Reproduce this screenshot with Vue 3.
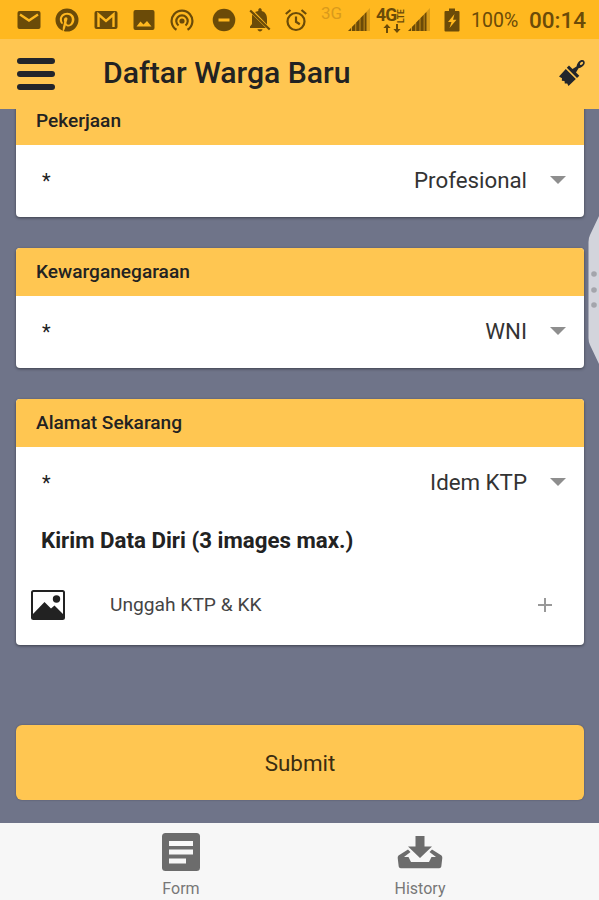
<template>
  <div class="app">
    <div class="status-bar">
      <svg class="st mail" width="24" height="20" viewBox="0 0 24 20">
        <rect x="0.5" y="1" width="23" height="18" rx="2" />
        <path class="cut" d="M3 4.5l9 6 9-6" />
      </svg>
      <svg class="st pinterest" width="24" height="24" viewBox="0 0 24 24">
        <path d="M9.04 21.54c.96.29 1.93.46 2.96.46a10 10 0 1 0-10-10c0 4.25 2.67 7.9 6.44 9.34-.09-.78-.18-2.07 0-2.96l1.15-4.94s-.29-.58-.29-1.5c0-1.38.86-2.41 1.84-2.41.86 0 1.26.63 1.26 1.44 0 .86-.57 2.09-.86 3.27-.17.98.52 1.84 1.52 1.84 1.78 0 3.16-1.9 3.16-4.58 0-2.4-1.72-4.04-4.19-4.04-2.82 0-4.48 2.1-4.48 4.31 0 .86.28 1.73.74 2.3.09.06.09.14.06.29l-.29 1.09c0 .17-.11.23-.28.11-1.28-.56-2.02-2.38-2.02-3.85 0-3.16 2.24-6.03 6.56-6.03 3.44 0 6.12 2.47 6.12 5.75 0 3.44-2.13 6.2-5.18 6.2-.97 0-1.92-.52-2.26-1.13l-.67 2.37c-.23.86-.86 2.01-1.29 2.7z" transform="translate(-1.8 -1.8) scale(1.15)" />
      </svg>
      <svg class="st gmail" width="24" height="20" viewBox="0 0 24 20">
        <rect x="0.5" y="1" width="23" height="18" rx="2" />
        <path class="cut" d="M4.500 17V4.500l7.500 6.500 7.500-6.500V17" />
      </svg>
      <svg class="st photo" width="22" height="22" viewBox="0 0 22 22">
        <rect x="0.5" y="1" width="21" height="20" rx="2" />
        <path class="hole" d="M3.5 17.5l4-5 3 3 3.500-3.500 4.500 5.500z" />
      </svg>
      <svg class="st cast" width="24" height="24" viewBox="0 0 24 24">
        <circle cx="12" cy="13" r="2.6" />
        <path class="line" d="M8.500 17.500a5.700 5.700 0 1 1 7 0M6.500 21.800a10.400 10.400 0 1 1 11 0" />
      </svg>
      <svg class="st dnd" width="24" height="24" viewBox="0 0 24 24">
        <circle cx="12" cy="12" r="11.300" />
        <rect class="hole" x="6.500" y="10.500" width="11" height="3" />
      </svg>
      <svg class="st bell" width="22" height="24" viewBox="0 0 22 24">
        <path d="M3.300 6.500L17 20H1v-1.500L3 16v-5c0-1.800 0-3 .3-4.500zM6 4C7 3.500 8.200 3.200 9.300 3V2c0-2.200 3.400-2.200 3.400 0v1C16.500 3.900 18 7.200 18 11v5.500zM8.500 21.300h5c-.4 2.800-4.600 2.800-5 0z" />
        <path class="line" d="M1.200 2.500l19.500 19" />
      </svg>
      <svg class="st alarm" width="24" height="24" viewBox="0 0 24 24">
        <circle class="line" cx="12" cy="13.500" r="8.500" />
        <path class="line" d="M12 8.500v5.300l3.800 2.400M1.800 6L6.500 2M22.200 6L17.500 2" />
      </svg>

      <span class="net-3g">3G</span>
      <svg class="st signal" width="22" height="24" viewBox="0 0 22 24">
        <path class="faint" d="M22 0v23H0z" />
        <path d="M0 23l3-3v3zM4 23v-4l3.400-3.500V23zM8.200 23v-8.400l3.400-3.500V23zM12.400 23V10.200L15.700 6.800V23zM16.500 23V6L18.500 4v19z" />
      </svg>
      <div class="net-4g">
        <div class="net-4g-top">4G<span class="lte">LTE</span></div>
        <svg class="arrows" width="20" height="9" viewBox="0 0 20 9">
          <path d="M5 0l3.600 4H6v5H4V4H1.400zM15 9l3.600-4H16V0h-2v5h-2.600z" />
        </svg>
      </div>
      <svg class="st signal second" width="22" height="24" viewBox="0 0 22 24">
        <path class="faint" d="M22 0v23H0z" />
        <path d="M0 23l3-3v3zM4 23v-4l3.400-3.500V23zM8.200 23v-8.400l3.400-3.500V23zM12.400 23V10.200L15.700 6.800V23zM16.500 23V6L18.500 4v19z" />
      </svg>
      <svg class="st battery" width="16" height="24" viewBox="0 0 16 24">
        <path d="M5 0.500h6v2.500h3.500q1 0 1 1v18.500q0 1-1 1h-13q-1 0-1-1V4q0-1 1-1H5z" />
        <path class="hole" d="M10.500 6L4 14h3.500L5.500 20 12.500 11.800H9z" />
      </svg>
      <span class="percent">100%</span>
      <span class="clock">00:14</span>
    </div>

    <header class="toolbar">
      <button class="menu" aria-label="Menu"><i></i><i></i><i></i></button>
      <h1>Daftar Warga Baru</h1>
      <svg class="brush" width="28" height="28" viewBox="0 0 28 28">
        <path d="M11 6.500l3.500 3.500 4-2.500c.5-2.500 2-5.200 4.300-6.200 2.800-1 4.700 1 3.700 3.700-1 2.300-3.500 3.800-6 4.300L18 13.500l3.300 3.300-2.300 2.200L8.800 8.800z" />
        <path d="M7.800 10L17.800 20l-7.300 7-1.300-2.600-2.400.2-.3-2.700-2.700-.2.200-2.500L1 17.500z" />
        <ellipse class="eye" cx="23.500" cy="4.300" rx="1.900" ry="1.200" transform="rotate(-45 23.500 4.300)" />
      </svg>
    </header>

    <main class="content">
      <section v-for="f in fields" :key="f.label" class="card">
        <h2>{{ f.label }}</h2>
        <div class="select-row">
          <span class="required">*</span>
          <span class="value">{{ f.value }}</span>
          <i class="caret"></i>
        </div>
        <div v-if="f.upload" class="upload">
          <h3>Kirim Data Diri (3 images max.)</h3>
          <div class="upload-row">
            <svg class="picture" width="34" height="30" viewBox="0 0 34 30">
              <rect class="frame" x="1" y="1" width="32" height="28" rx="1.500" />
              <circle cx="25.500" cy="9" r="3.700" />
              <path d="M1 25L13.500 12l6.500 6.500 3.500-3L33 25v4H1z" />
            </svg>
            <span class="upload-label">Unggah KTP &amp; KK</span>
            <svg class="plus" width="16" height="16" viewBox="0 0 16 16">
              <path d="M8 1v14M1 8h14" />
            </svg>
          </div>
        </div>
      </section>

      <button class="submit">Submit</button>
    </main>

    <nav class="tabs">
      <a class="tab">
        <svg width="44" height="40" viewBox="0 0 44 40">
          <rect x="3" y="1" width="38" height="38" rx="3.500" />
          <path class="paper" d="M10 9h24v5H10zM10 17.500h24v5H10zM10 26.500h17v5H10z" />
        </svg>
        <span>Form</span>
      </a>
      <a class="tab">
        <svg width="46" height="40" viewBox="0 0 46 40">
          <path d="M18.500 4h9v10.500H35L23 26 11 14.500h7.500z" />
          <path d="M11 17.500L1.500 23.500Q.5 24.500.7 26l1 8.500q.3 1.700 2 1.700h38.600q1.700 0 2-1.700l1-8.500q.2-1.500-.8-2.500L35 17.500l-2.500 2.500 6.500 5h-4.500l-2.500 5H14l-2.500-5H7l6.500-5z" />
        </svg>
        <span>History</span>
      </a>
    </nav>

    <!-- edge panel handle of the phone -->
    <svg class="edge" width="12" height="152" viewBox="0 0 12 152">
      <path d="M12 0L3 19Q1.500 22 1.500 26v96q0 4 1.500 7L12 148z" />
      <circle cx="7" cy="58" r="2.800" />
      <circle cx="7" cy="74" r="2.800" />
      <circle cx="7" cy="89" r="2.800" />
    </svg>
  </div>
</template>

<script setup>
import { ref } from 'vue'

const fields = ref([
  { label: 'Pekerjaan', value: 'Profesional' },
  { label: 'Kewarganegaraan', value: 'WNI' },
  { label: 'Alamat Sekarang', value: 'Idem KTP', upload: true },
])
</script>

<style>
body {
  margin: 0;
}
</style>

<style scoped>
.app {
  position: relative;
  width: 599px;
  height: 900px;
  display: flex;
  flex-direction: column;
  overflow: hidden;
  background: #6f7489;
  font-family: Roboto, "Liberation Sans", sans-serif;
  color: #222;
}
button {
  border: none;
  padding: 0;
  font-family: inherit;
}

/* status bar */
.status-bar {
  height: 39px;
  flex: none;
  display: flex;
  align-items: center;
  background: #ffb81f;
  color: #6b4b08;
  white-space: nowrap;
}
.st {
  flex: none;
  fill: #6b4b08;
}
.st .cut {
  fill: none;
  stroke: #ffb81f;
  stroke-width: 2.4;
}
.st .hole {
  fill: #ffb81f;
}
.st .line {
  fill: none;
  stroke: #6b4b08;
  stroke-width: 2.2;
}
.st .faint {
  opacity: 0.25;
}
.mail { margin-left: 17px; }
.pinterest { margin-left: 14px; }
.gmail { margin-left: 15px; }
.photo { margin-left: 15px; }
.cast { margin-left: 15px; }
.dnd { margin-left: 18px; }
.bell { margin-left: 13px; }
.alarm { margin-left: 13px; }
.net-3g {
  width: 22px;
  margin-left: 13px;
  margin-bottom: 13px;
  font-size: 17px;
  line-height: 20px;
  color: #d99a1b;
}
.signal { margin-left: 5px; }
.signal.second { margin-left: 1px; }
.net-4g {
  width: 31px;
  margin-left: 6px;
  display: flex;
  flex-direction: column;
}
.net-4g-top {
  display: flex;
  font-size: 17.5px;
  font-weight: 700;
  line-height: 17px;
  letter-spacing: -0.8px;
}
.lte {
  writing-mode: vertical-rl;
  transform: rotate(180deg);
  margin-left: 1px;
  font-size: 8.5px;
  line-height: 9px;
  height: 16px;
  letter-spacing: 0;
}
.arrows {
  margin-left: 6px;
  fill: #6b4b08;
}
.battery { margin-left: 14px; }
.percent {
  width: 48px;
  margin-left: 11px;
  font-size: 19.5px;
  letter-spacing: 0;
  padding-top: 1px;
}
.clock {
  margin-left: 10px;
  font-size: 22.5px;
  font-weight: 500;
  padding-top: 1px;
}

/* toolbar */
.toolbar {
  height: 70px;
  flex: none;
  display: flex;
  align-items: center;
  background: #ffc651;
}
.menu {
  width: 38px;
  margin-left: 17px;
  display: flex;
  flex-direction: column;
  gap: 7px;
  background: transparent;
}
.menu i {
  height: 6px;
  border-radius: 3px;
  background: #22252b;
}
.toolbar h1 {
  flex: 1;
  margin: 0 0 2px 48px;
  font-size: 30.2px;
  font-weight: 500;
  line-height: 36px;
}
.brush {
  margin-right: 13px;
  margin-bottom: 2px;
  fill: #22252b;
}
.brush .eye {
  fill: #ffc651;
}

/* form */
.content {
  flex: 1;
  min-height: 0;
  overflow: hidden;
  padding: 0 15px 0 16px;
}
.card {
  margin-bottom: 31px;
  border-radius: 4px;
  background: #fff;
  box-shadow: 0 1px 3px rgba(0, 0, 0, 0.45);
}
.card:first-child {
  margin-top: -12px;
}
.card h2 {
  margin: 0;
  height: 48px;
  padding-left: 20px;
  border-radius: 4px 4px 0 0;
  background: #ffc651;
  font-size: 19.1px;
  font-weight: 500;
  line-height: 47px;
}
.select-row {
  height: 72px;
  display: flex;
  align-items: center;
  padding: 0 18px 0 26px;
}
.required {
  flex: 1;
  margin-bottom: 1px;
  font-size: 20px;
}
.value {
  margin-bottom: 2px;
  font-size: 22.3px;
  color: #333;
}
.caret {
  margin-left: 23px;
  margin-bottom: 3px;
  border: 8px solid transparent;
  border-top-color: #8e8e8e;
  border-bottom: none;
}
.upload {
  height: 126px;
}
.upload h3 {
  margin: 0;
  padding: 7px 0 0 25px;
  font-size: 22.3px;
  font-weight: 700;
  line-height: 28px;
}
.upload-row {
  height: 72px;
  margin-top: 15px;
  display: flex;
  align-items: center;
  padding: 0 31px 0 15px;
}
.picture {
  fill: #222;
}
.picture .frame {
  fill: none;
  stroke: #222;
  stroke-width: 2;
}
.upload-label {
  flex: 1;
  margin-left: 45px;
  margin-bottom: 1px;
  font-size: 19.2px;
  color: #444;
}
.plus {
  margin-bottom: 1px;
  stroke: #999;
  stroke-width: 2;
}
.submit {
  display: block;
  width: 100%;
  height: 75px;
  margin-top: 80px;
  border-radius: 6px;
  background: #ffc651;
  color: #3a2c10;
  font-size: 22.4px;
  box-shadow: 0 0 2px rgba(0, 0, 0, 0.3);
}

/* bottom tabs */
.tabs {
  height: 77px;
  flex: none;
  display: flex;
  justify-content: center;
  padding-left: 2px;
  background: #f7f7f7;
}
.tab {
  width: 239px;
  padding-top: 9px;
  display: flex;
  flex-direction: column;
  align-items: center;
  fill: #6c6c6c;
  color: #777;
  font-size: 16px;
  line-height: 20px;
}
.tab span {
  margin-top: 7px;
}
.paper {
  fill: #f7f7f7;
}

.edge {
  position: absolute;
  right: 0;
  top: 216px;
  fill: #d3d4dc;
}
.edge circle {
  fill: #a4a5ac;
}
</style>
